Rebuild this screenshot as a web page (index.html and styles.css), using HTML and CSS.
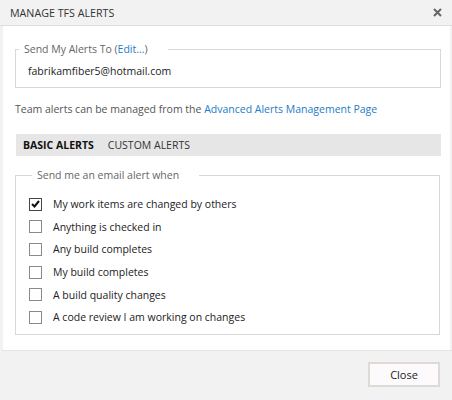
FILE: index.html
```html
<!DOCTYPE html>
<html lang="en">
<head>
    <meta charset="UTF-8">
    <title>Manage TFS Alerts</title>
    <link rel="stylesheet" href="styles.css">
</head>
<body>
    <div class="dialog">
        <div class="titlebar">
            <span class="title">MANAGE TFS ALERTS</span>
            <span class="close-x">
                <svg width="9" height="9" viewBox="0 0 9 9"><path d="M1 1 L8 8 M8 1 L1 8" stroke="#666" stroke-width="2"/></svg>
            </span>
        </div>
        <div class="content">
            <fieldset class="box address">
                <legend>Send My Alerts To (<a href="#">Edit...</a>)</legend>
                <div class="email">fabrikamfiber5@hotmail.com</div>
            </fieldset>
            <p class="note">Team alerts can be managed from the <a href="#">Advanced Alerts Management Page</a></p>
            <div class="tabs">
                <span class="tab active">BASIC ALERTS</span>
                <span class="tab">CUSTOM ALERTS</span>
            </div>
            <fieldset class="box alerts">
                <legend>Send me an email alert when</legend>
                <label class="check"><span class="box-icon checked"><svg width="9" height="8" viewBox="0 0 9 8"><path d="M1 4 L3.5 6.5 L8 1" fill="none" stroke="#111" stroke-width="2"/></svg></span>My work items are changed by others</label>
                <label class="check"><span class="box-icon"></span>Anything is checked in</label>
                <label class="check"><span class="box-icon"></span>Any build completes</label>
                <label class="check"><span class="box-icon"></span>My build completes</label>
                <label class="check"><span class="box-icon"></span>A build quality changes</label>
                <label class="check"><span class="box-icon"></span>A code review I am working on changes</label>
            </fieldset>
        </div>
        <div class="footer">
            <button class="btn">Close</button>
        </div>
    </div>
</body>
</html>
```

FILE: styles.css
```css
body {
    margin: 0;
    font-family: "Open Sans", Arial, sans-serif;
    font-size: 10.5px;
    line-height: 16px;
    color: #222;
    background: #f0f0f0;
}
a {
    color: #1e7cc8;
    text-decoration: none;
}
.dialog {
    width: 452px;
    height: 400px;
    background: #f2f2f2;
    display: flex;
    flex-direction: column;
}
.titlebar {
    height: 25px;
    display: flex;
    align-items: center;
    justify-content: space-between;
    padding: 0 10px;
    border-bottom: 1px solid #dedede;
}
.title {
    font-size: 10.7px;
    color: #333;
}
.close-x {
    display: flex;
}
.content {
    background: #fff;
    margin: 0 2px 0 3px;
    padding: 15px 9px 15px 12px;
}
.box {
    margin: 0;
    padding: 0;
    border: 1px solid #d8d8d8;
}
.box legend {
    margin-left: 3px;
    padding: 0 20px 0 5px;
    color: #666;
}
.email {
    padding: 6px 12px 8px;
}
.note {
    margin: 13px 0 17px;
    color: #555;
}
.tabs {
    height: 22px;
    margin-left: 1px;
    background: #e6e6e6;
    display: flex;
    align-items: center;
    gap: 14px;
    padding: 0 7px;
    color: #333;
}
.tab.active {
    font-weight: bold;
    color: #111;
}
.alerts {
    margin-top: 11px;
    margin-right: 1px;
    padding: 10px 0 5px 13px;
}
.check {
    display: flex;
    align-items: center;
    height: 22.6px;
}
.box-icon {
    width: 11px;
    height: 11px;
    border: 1px solid #8a8a8a;
    margin-right: 11px;
    display: flex;
    align-items: center;
    justify-content: center;
}
.box-icon.checked {
    border-color: #444;
}
.footer {
    flex: 1;
    border-top: 1px solid #e4e4e4;
    margin-left: 2px;
    display: flex;
    justify-content: flex-end;
    padding: 11px 12px 0 0;
    align-items: flex-start;
}
.btn {
    width: 72px;
    height: 25px;
    background: #fdfafc;
    border: 2px solid #dedad6;
    font-family: "Open Sans", Arial, sans-serif;
    font-size: 11px;
    color: #222;
}
```
